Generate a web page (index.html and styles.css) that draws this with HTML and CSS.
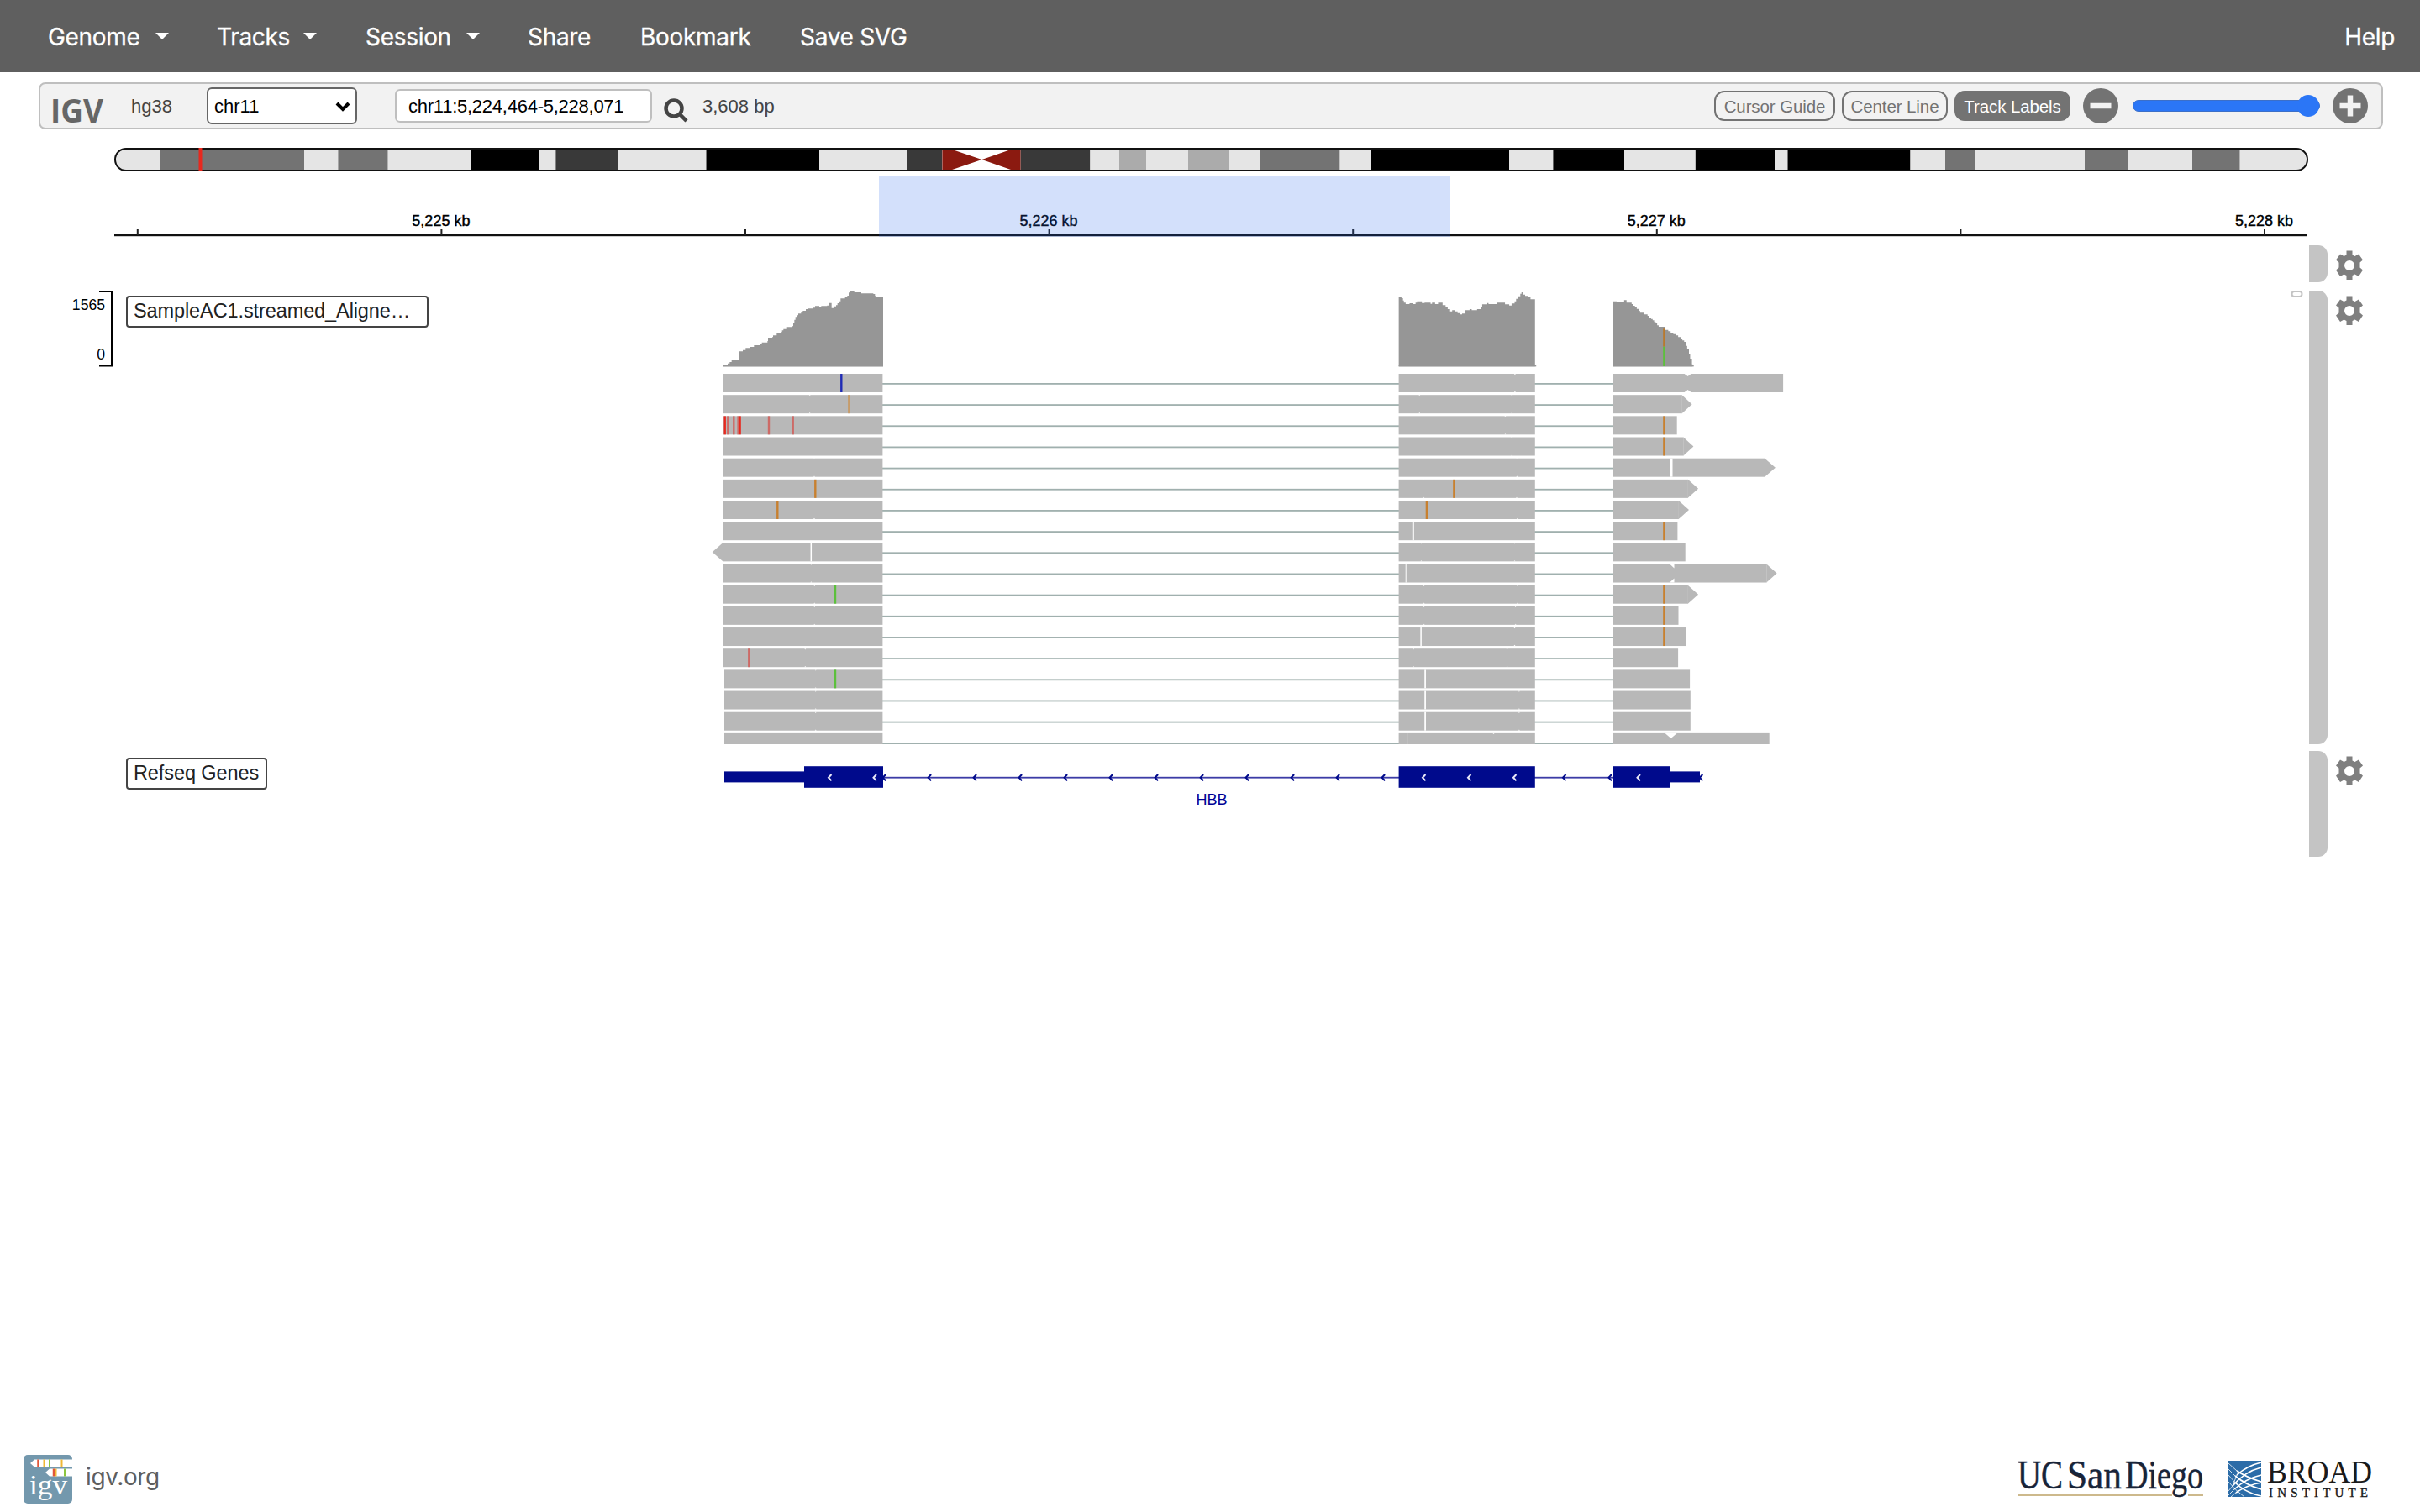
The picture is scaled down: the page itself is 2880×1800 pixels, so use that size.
FILE: index.html
```html
<!DOCTYPE html>
<html lang="en">
<head>
<meta charset="utf-8">
<title>IGV</title>
<link rel="stylesheet" href="styles.css">
</head>
<body>
<nav class="navbar">
  <span class="item drop">Genome</span>
  <span class="item drop t2">Tracks</span>
  <span class="item drop t3">Session</span>
  <span class="item t4">Share</span>
  <span class="item t5">Bookmark</span>
  <span class="item t6">Save SVG</span>
  <span class="item help">Help</span>
</nav>

<section class="toolbar">
  <svg class="igv-mark" width="64" height="42" viewBox="0 0 64 42"><text x="-1" y="35" textLength="63" lengthAdjust="spacingAndGlyphs">IGV</text></svg>
  <span class="genome">hg38</span>
  <span class="select">chr11<svg width="20" height="14" viewBox="0 0 20 14"><path d="M3 3l7 7 7-7" fill="none" stroke="#000" stroke-width="4"/></svg></span>
  <span class="locus">chr11:5,224,464-5,228,071</span>
  <svg class="search" width="30" height="30" viewBox="0 0 30 30"><circle cx="12" cy="12" r="9.5"/><path d="M18.500 18.500L27 27"/></svg>
  <span class="size">3,608 bp</span>
  <span class="btn b1">Cursor Guide</span>
  <span class="btn b2">Center Line</span>
  <span class="btn b3 on">Track Labels</span>
  <svg class="zoom-out" width="42" height="42" viewBox="0 0 42 42"><circle cx="21" cy="21" r="21"/><path d="M8.500 21h25"/></svg>
  <span class="slider"><span class="thumb"></span></span>
  <svg class="zoom-in" width="42" height="42" viewBox="0 0 42 42"><circle cx="21" cy="21" r="21"/><path d="M8.500 21h25M21 8.500v25"/></svg>
</section>

<main class="browser">
  <svg class="ideogram" width="2748" height="40" viewBox="0 166 2748 40">
    <clipPath id="chr"><rect x="137" y="177" width="2609" height="26" rx="13"/></clipPath>
    <g id="bands" clip-path="url(#chr)"></g>
    <rect x="137" y="177" width="2609" height="26" rx="13" fill="none" stroke="#111" stroke-width="2"/>
    <path d="M238.500 176v28" stroke="#e8281e" stroke-width="4"/>
  </svg>
  <svg class="ruler" width="2748" height="80" viewBox="0 206 2748 80">
    <path d="M136 281.500H2746" stroke="#ccc"/><path d="M136 280H2746" stroke="#111" stroke-width="2"/>
    <g id="ticks"></g>
    <rect x="1046" y="210" width="680" height="72" fill="#2364ec" fill-opacity=".2"/>
  </svg>
  <div class="row blank"><div class="canvas"></div><div class="drag"></div><svg class="gear" viewBox="0 0 34 36"><use href="#cog"/></svg></div>
  <div class="row reads">
    <svg width="2748" height="540" viewBox="0 346 2748 540">
      <path d="M118 347h15v88.500h-15" fill="none" stroke="#000" stroke-width="2"/>
      <g class="axis"><text x="125" y="369">1565</text><text x="125" y="428">0</text></g>
      <g id="coverage"></g>
      <g id="reads"></g>
      <rect x="2727.500" y="347" width="12" height="6" rx="3" fill="none" stroke="#c4c4c4" stroke-width="2"/>
    </svg>
    <span class="label sample">SampleAC1.streamed_Aligne…</span>
    <div class="drag"></div><svg class="gear" viewBox="0 0 34 36"><use href="#cog"/></svg>
  </div>
  <div class="row genes">
    <svg width="2748" height="126" viewBox="0 894 2748 126">
      <g id="gene"></g>
      <text class="gene-name" x="1442" y="958">HBB</text>
    </svg>
    <span class="label refseq">Refseq Genes</span>
    <div class="drag"></div><svg class="gear" viewBox="0 0 34 36"><use href="#cog"/></svg>
  </div>
</main>

<footer class="footer">
  <svg width="58" height="58" viewBox="0 0 58 58">
    <rect width="58" height="58" rx="5" fill="#7398ad"/>
    <path d="M8 10l5-4.500h45v9H13zM26 21l5-4.500h27v9H31z" fill="#fff"/>
    <path d="M17.500 5.500v9M36 16.500v9" stroke="#e0573a" stroke-width="2.500"/>
    <path d="M24.500 5.500v9M45.500 5.500v9M38.500 16.500v9" stroke="#f0b836" stroke-width="2"/>
    <path d="M31 5.500v9M49 16.500v9" stroke="#8cc63f" stroke-width="2"/>
    <text x="7" y="47" class="igv-serif" textLength="45" lengthAdjust="spacingAndGlyphs">igv</text>
  </svg>
  <span class="site">igv.org</span>
  <svg class="ucsd" width="224" height="62" viewBox="2400 1730 224 62">
    <text x="2401" y="1772" textLength="54" lengthAdjust="spacingAndGlyphs">UC</text>
    <text x="2460" y="1772" textLength="65" lengthAdjust="spacingAndGlyphs">San</text>
    <text x="2529" y="1772" textLength="93" lengthAdjust="spacingAndGlyphs">Diego</text>
    <path d="M2402 1780h183M2604 1780h18" stroke="#cdb98c" stroke-width="2"/>
  </svg>
  <svg class="broad" width="172" height="60" viewBox="2652 1730 172 60">
    <rect x="2652" y="1739" width="39" height="43" fill="#2b6ca8"/>
    <g fill="none" stroke="#fff">
      <path stroke-width="1.700" d="M2662 1756q12-11 29-15M2657 1769q14-17 34-22M2659 1773q14-13 32-17M2661 1777q13-9 30-12"/>
      <path stroke-width="1.700" d="M2662 1751q12 8 29 13M2660 1757q13 11 31 16M2660 1765q12 12 31 16"/>
      <path stroke-width=".8" d="M2652 1775l5-6 5-13M2652 1780l7-7M2655 1782l6-5M2652 1742l10 9M2652 1749l8 8M2652 1756l8 9M2652 1764q8 10 19 18"/>
    </g>
    <text x="2698" y="1765" font-size="38.500" textLength="125" lengthAdjust="spacingAndGlyphs">BROAD</text>
    <text x="2700" y="1782" font-size="15" stroke="#1a1a1a" stroke-width=".4" textLength="118">INSTITUTE</text>
  </svg>
</footer>

<svg width="0" height="0" class="defs"><defs>
  <path id="cog" fill="#7f7f7f" fill-rule="evenodd" d="M13.500 .500h7v5l3 1.500 4.500-2.500 5 7-3.500 3v6l3.500 3-5 7.500-4.500-2.500-3 1.500v5h-7v-5l-3-1.500-4.500 2.500-5-7.500 3.500-3v-6l-3.500-3 5-7 4.500 2.500 3-1.500zM17 12a6 6 0 1 0 0 12 6 6 0 1 0 0-12z"/>
</defs></svg>
<script src="script.js"></script>
</body>
</html>
```
FILE: styles.css
```css
* { box-sizing: border-box; }
body {
  margin: 0; width: 2880px; height: 1800px; overflow: hidden;
  display: flex; flex-direction: column; background: #fff;
  font-family: "Liberation Sans", Arial, sans-serif; color: #444;
}
svg { display: block; flex: none; }
.navbar {
  height: 86px; flex: none; display: flex; align-items: center; background: #5f5f5f;
  color: #fff; font: 28px Inter, sans-serif; padding: 2px 30px 0 57px; white-space: nowrap;
}
.item { letter-spacing: -.3px; -webkit-text-stroke: .3px #fff; }
.drop { display: flex; align-items: center; justify-content: space-between; width: 144px; margin-right: 57px; }
.drop::after { content: ""; border: 8.5px solid transparent; border-top: 8.5px solid #fff; border-bottom: 0; margin-bottom: 3px; }
.t2 { width: 119px; margin-right: 58px; }
.t3 { width: 136px; margin-right: 57px; }
.t4 { width: 134px; }
.t5 { width: 190px; }
.help { margin-left: auto; }
.toolbar {
  height: 56px; flex: none; margin: 12px 44px 0 46px; padding-left: 13px; display: flex; align-items: center;
  background: #f2f2f2; border: 2px solid #bfbfbf; border-radius: 8px; font-size: 22px; white-space: nowrap;
}
.igv-mark { margin-top: 12px; }
.igv-mark text { font: bold 40px "Open Sans", sans-serif; fill: #666; }
.genome { width: 90px; margin-left: 31px; padding-top: 2px; }
.select {
  width: 179px; height: 44px; padding: 1px 5px 0 7px; display: flex; align-items: center; justify-content: space-between;
  background: #fff; border: 2px solid #666; border-radius: 6px; color: #000;
}
.locus {
  width: 306px; height: 40px; margin-left: 45px; padding-left: 14px; line-height: 38px;
  background: #fff; border: 2px solid #bfbfbf; border-radius: 6px; color: #000; letter-spacing: -.25px;
}
.search { margin: 12px 0 0 14px; fill: none; stroke: #444; stroke-width: 4.5; }
.size { margin-left: 16px; width: 1204px; padding-top: 2px; }
.btn {
  height: 36px; border: 2px solid #737373; border-radius: 12px; text-align: center; line-height: 34px;
  color: #737373; background: #f2f2f2; font-size: 20.5px; letter-spacing: -.1px;
}
.b1 { width: 144px; }
.b2 { width: 126px; margin-left: 8px; }
.b3 { width: 138px; margin-left: 8px; }
.on { background: #737373; color: #fff; }
.zoom-out { margin-left: 15px; }
.zoom-in { margin-left: 15px; }
.toolbar circle { fill: #737373; }
.toolbar .search circle { fill: none; }
.zoom-in path, .zoom-out path { stroke: #f2f2f2; stroke-width: 6.5; }
.slider { width: 223px; height: 14px; margin-left: 17px; background: #2b76f6; border: 1px solid #3c6fc8; border-radius: 7px; display: flex; align-items: center; justify-content: flex-end; }
.thumb { width: 26px; height: 26px; border-radius: 50%; background: #2b76f6; flex: none; }
.browser { display: flex; flex-direction: column; padding-top: 12px; }
.ruler text { font-size: 18px; text-anchor: middle; fill: #000; stroke: #000; stroke-width: .4; }
.row { display: flex; position: relative; }
.blank { height: 44px; margin: 6px 0 10px; }
.canvas { width: 2748px; }
.reads { height: 540px; margin-bottom: 8px; }
.genes { height: 126px; }
.drag { width: 22px; background: #c4c4c4; border-radius: 0 11px 11px 0; }
.gear { width: 34px; height: 36px; margin: 6px 0 0 9px; }
.axis text { font-size: 17.6px; text-anchor: end; fill: #000; }
.label {
  position: absolute; left: 150px; top: 6px; height: 38px; padding-left: 7px; line-height: 33px;
  font-size: 23.5px; letter-spacing: -.1px; color: #222; background: #fff; border: 2px solid #444; border-radius: 4px; white-space: nowrap;
}
.sample { width: 360px; }
.refseq { width: 168px; top: 8px; }
.gene-name { font-size: 18px; text-anchor: middle; fill: #000094; }
.footer { margin-top: auto; height: 68px; flex: none; display: flex; align-items: flex-start; padding: 0 56px 0 28px; }
.site { font: 28px/53px Inter, sans-serif; letter-spacing: -.4px; color: #5f5f5f; margin-left: 16px; }
.igv-serif { font: 34px "Liberation Serif", serif; fill: #fff; }
.ucsd { margin-left: auto; margin-top: -2px; }
.ucsd text { font: 49px "Liberation Serif", serif; fill: #182438; stroke: #182438; stroke-width: .5; }
.broad { margin: -2px 0 0 28px; }
.broad text { font-family: "Liberation Serif", serif; fill: #1a1a1a; }
.defs { position: absolute; }
```
FILE: script.js
```js
const put = (id, html) => { document.getElementById(id).innerHTML = html; };
const box = (x, y, w, h, fill) => `<rect x="${x}" y="${y}" width="${w}" height="${h}" fill="${fill}"/>`;

// Chromosome bands: [start, colour]
const L = '#e5e5e5', G = '#737373', D = '#393939', K = '#000', M = '#ababab', W = '#fff';
const bands = [[136,L],[190,G],[362,L],[402.4,G],[461.7,L],[561,K],[642,L],[661.4,D],[735,L],[840.5,K],[975,L],
  [1080,D],[1121.4,W],[1214.5,D],[1297.4,L],[1332,M],[1364,L],[1414,M],[1463,L],[1499.5,G],[1594.6,L],[1632,K],
  [1796,L],[1848.4,K],[1933,L],[2017.8,K],[2112,L],[2127.5,K],[2273.5,L],[2315,G],[2351,L],[2481,G],[2532.4,L],
  [2609,G],[2665.7,L],[2746,L]];
put('bands', bands.slice(0, -1).map(([x, c], i) => box(x, 176, bands[i + 1][0] - x, 28, c)).join('') +
  '<path d="M1121.400 174L1168.500 190L1121.400 206ZM1214.500 174L1168.500 190L1214.500 206Z" fill="#8b1a10"/>');

// Ruler
let ticks = '';
for (let i = 0; i < 8; i++) {
  const x = 163.8 + i * 361.6;
  ticks += box(x - 1, 273, 2, 7, '#222');
  if (i % 2) ticks += `<text x="${x - .5}" y="269">5,22${5 + (i - 1) / 2} kb</text>`;
}
put('ticks', ticks);

// Coverage: pairs of bin start and top, sx = horizontal units per pixel
const steps = (x0, sx, pts, end, foot) => {
  const px = v => x0 + v / sx, py = v => 330 + v / 3;
  let d = `M${px(pts[0])} 436.2`;
  for (let i = 0; i < pts.length; i += 2) d += `V${py(pts[i + 1])}H${px(pts[i + 2] === undefined ? end : pts[i + 2])}`;
  return `<path d="${d}V436.2Z" fill="#969696"/>` + box(px(pts[0]), 435, (foot - pts[0]) / sx, 1.4, '#969696');
};
const c1 = [60,314,78,308,85,303,92,297,119,265,132,260,142,253,158,249,172,243,195,240,200,233,220,228,222,216,237,214,
  240,208,253,201,268,196,272,190,277,185,290,178,308,175,312,165,316,152,320,142,325,136,330,130,340,126,346,120,357,114,364,112,
  382,109,390,103,405,106,412,103,433,101,438,92,449,110,457,104,465,100,470,93,475,86,481,76,497,72,505,66,510,55,514,49,
  530,54,555,58,598,60,604,67,608,70];
const c2 = [69,69,78,75,83,83,86,91,92,96,105,93,115,96,125,91,130,86,146,92,155,91,175,95,180,91,190,96,200,91,215,100,
  225,107,232,114,240,122,247,118,257,122,265,128,272,133,280,130,291,118,305,114,312,118,330,114,342,108,347,97,364,92,
  368,96,397,91,423,97,437,101,445,94,455,86,460,77,466,68,474,59,478,54,482,62,490,67,500,70,508,79];
const c3 = [784,86,795,89,800,87,820,82,828,91,845,96,850,102,856,108,862,113,868,120,873,127,885,133,898,138,902,144,910,149,
  915,154,920,160,925,165,930,172,935,177,957,188,967,193,975,198,984,203,994,208,1000,214,1008,220,1014,226,1020,231,
  1027,245,1030,258,1036,275,1040,291,1046,311];
put('coverage', steps(840, 3, c1, 633, 633) + steps(1640, 2.8, c2, 523, 527) + steps(1640, 2.8, c3, 1048, 1052) +
  box(1979.2, 391.3, 2.5, 21.4, '#b8792e') + box(1979.2, 412.7, 2.5, 23.3, '#5cc03c'));

// Aligned reads. s/e: start and end, t: arrow tip, m: mismatches, g: gaps, n: mate-end nicks
const O = '#c8802f', R = '#cd6a66', B = '#e8281e', N = '#5cc03c', snp = [1980.4, O];
const rows = [
  {e:2122.1, notch:[2008.6,4,3], m:[[1001.3,'#1f2bb5']], n:[1802.9]},
  {e:2001.8, t:2013.6, m:[[1010.3,'#c69c6b']], n:[963.7,1689.3,1799.3]},
  {e:1995.7, m:[[862.7,B],[866.3,R],[873.3,R],[878.6,R],[880.6,B],[915,R],[943.7,R],snp], n:[1791.4]},
  {e:2003.6, t:2015.4, m:[snp], n:[1799.3]},
  {e:2100.4, t:2112.9, g:[[1989,3]], n:[969,1805.4]},
  {e:2008.9, t:2021.1, m:[[970.3,O],[1730.4,O]], n:[1694.3,1805]},
  {e:1997.9, t:2010, m:[[925.3,O],[1697.9,O]], n:[969,1806]},
  {e:1996.4, g:[[1681.8,2]], m:[snp]},
  {e:2005.7, left:1, g:[[965.3,1.5]], n:[1691.4,1802.5]},
  {e:2102.5, t:2114.6, join:1, g:[[1673.2,1]], n:[965.3]},
  {e:2008.9, t:2021.1, m:[[994,N],snp], n:[969.3,1694.6,1806]},
  {e:1997.5, m:[snp], n:[969.3,1694.6,1803.6]},
  {e:2006.8, g:[[1691.1,1.5]], m:[snp], n:[1802.5]},
  {e:1997.1, m:[[891.3,R]], n:[958.3,1682.1,1793.6]},
  {s:862, e:2011.1, g:[[1696.1,1.7]], m:[[994,N]], n:[970.7]},
  {s:862, e:2011.8, g:[[1696.1,1.7]], n:[970.7,1807.9]},
  {s:862, e:2011.8, g:[[1696.1,1.7]], n:[970.7,1807.9]},
  {s:862, e:2105.7, notch:[1988.6,7,6], g:[[1674.6,1]], n:[1777.5]},
];
const grey = '#b8b8b8';
const cut = (x, y, w, h) => `<path d="M${x - w} ${y}h${2 * w}l${-w} ${h}ZM${x - w} ${y + 22}h${2 * w}l${-w} ${-h}Z" fill="#fff"/>`;
put('reads', rows.map((r, i) => {
  const y = 445 + i * 25.17, s = r.s || 860, last = i === 17;
  const ly = last ? 884.5 : y + 11;
  let o = box(1050, ly, 615, 1.8, '#a0b0ae') + box(1826, ly, 95, 1.8, '#a0b0ae');
  o += box(s, y, 1050.4 - s, 22, grey) + box(1664.6, y, 162.2, 22, grey) + box(1920, y, r.e - 1920, 22, grey);
  if (r.t) o += `<path d="M${r.e - .2} ${y}L${r.t} ${y + 11}L${r.e - .2} ${y + 22}Z" fill="${grey}"/>`;
  if (r.left) o += `<path d="M860.2 ${y}L847.7 ${y + 11}L860.2 ${y + 22}Z" fill="${grey}"/>`;
  if (r.notch) o += cut(r.notch[0], y, r.notch[1], r.notch[2]);
  if (r.join) o += `<path d="M1987.1 ${y}h5.4v5ZM1987.1 ${y + 22}h5.4v-5Z" fill="#fff"/>`;
  (r.g || []).forEach(([x, w]) => { o += box(x - w / 2, y, w, 22, '#fff'); });
  (r.n || []).forEach(x => { o += cut(x, y, 1, 1.2); });
  (r.m || []).forEach(([x, c]) => { o += box(x - 1.2, y, 2.4, 22, c); });
  return o;
}).join(''));

// Gene model
const navy = '#000a8c';
let gene = box(1050, 924.8, 871, 1.8, '#3c3ca6') + box(862, 918.4, 95, 13, navy) + box(957, 912.2, 94, 25.6, navy) +
  box(1664.6, 912.2, 162.2, 25.6, navy) + box(1920, 912.2, 67, 25.6, navy) + box(1987, 918.4, 36, 13, navy);
const chev = (x, c) => `<path d="M${x + 4.5} 922l-3.5 3.7 3.5 3.7" fill="none" stroke="${c}" stroke-width="2"/>`;
[985, 1038.5, 1692, 1746, 1800, 1947.5].forEach(x => { gene += chev(x, '#e8e8f8'); });
for (let x = 1643.6; x > 1048; x -= 54) gene += chev(x, navy);
[1859, 1913.5, 2021.8].forEach(x => { gene += chev(x, navy); });
put('gene', gene);
```
